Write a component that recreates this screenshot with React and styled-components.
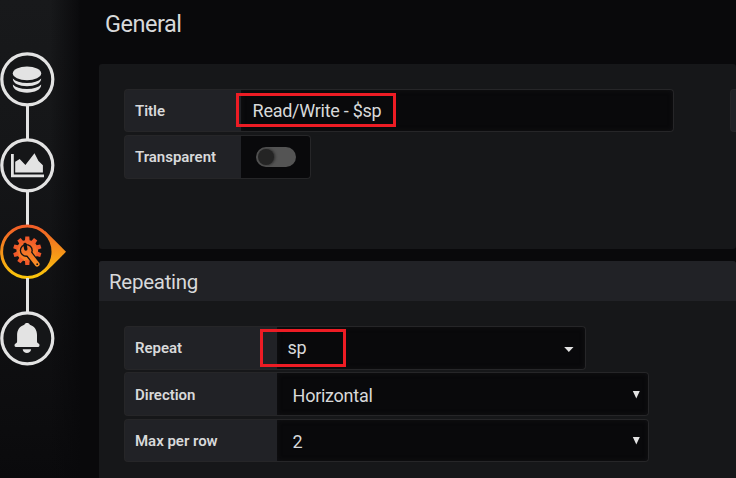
import React from "react";
import styled, { createGlobalStyle } from "styled-components";

const GlobalStyle = createGlobalStyle`
  * { box-sizing: border-box; }
  body {
    margin: 0;
    background: #09090b;
    color: #d8d9da;
    font-family: Roboto, "Liberation Sans", sans-serif;
    overflow: hidden;
  }
`;

const Page = styled.div`
  display: flex;
  width: 736px;
  height: 478px;
  overflow: hidden;
`;

const Rail = styled.nav`
  display: flex;
  flex-direction: column;
  flex: none;
  width: 80px;
  padding-top: 52px;
  background: linear-gradient(90deg, rgba(9, 9, 11, 0) 50px, rgba(9, 9, 11, 0.85) 78px, #09090b 80px),
    linear-gradient(180deg, #18191b 0, #151618 150px, #0c0c0e 430px, #0a0a0c 478px);
`;

const Step = styled.svg`
  display: block;
  flex: none;
  width: 68px;
  height: 55px;
  overflow: visible;
`;

const Connector = styled.div`
  flex: none;
  width: 3px;
  height: 34.4px;
  margin: -2px 0 -1px 26px;
  background: #e3e3e3;
`;

const Main = styled.main`
  flex: none;
  display: flex;
  flex-direction: column;
  width: 656px;
  padding-left: 19px;
`;

const Heading = styled.h2`
  flex: none;
  margin: 0;
  height: 64px;
  padding: 10px 0 0 6px;
  font-size: 23.5px;
  line-height: 28px;
  font-weight: 400;
  letter-spacing: -0.5px;
`;

const Panel = styled.section`
  flex: none;
  height: ${(p) => p.$height}px;
  margin-bottom: 12px;
  border-radius: 3px;
  background: #161719;
`;

const PanelHeader = styled.h3`
  margin: 0;
  height: 40px;
  padding-left: 10px;
  border-radius: 3px 3px 0 0;
  background: #212226;
  font-size: 20.5px;
  line-height: 42px;
  font-weight: 400;
  letter-spacing: -0.28px;
`;

const Columns = styled.div`
  display: flex;
  gap: 56px;
  padding: 25px 0 0 25px;
`;

const Fields = styled.div`
  display: flex;
  flex-direction: column;
  flex: none;
`;

const Row = styled.div`
  position: relative;
  display: flex;
  flex: none;
  width: ${(p) => p.$width}px;
  height: ${(p) => p.$height}px;
  margin-bottom: ${(p) => p.$gap || 0}px;
`;

const Label = styled.label`
  flex: none;
  width: ${(p) => p.$width}px;
  padding-left: 10px;
  border: 1px solid #262628;
  border-right: 0;
  border-radius: 4px 0 0 4px;
  background: #212226;
  font-size: 15px;
  line-height: ${(p) => p.$line || 42}px;
  font-weight: 600;
  letter-spacing: -0.02px;
`;

const Field = styled.div`
  display: flex;
  flex: 1;
  align-items: center;
  justify-content: space-between;
  padding: ${(p) => p.$padding};
  border: 1px solid #262628;
  border-left: 0;
  border-radius: 0 4px 4px 0;
  background: #09090b;
  box-shadow: ${(p) => (p.$flat ? "none" : "inset 0 0 5px #131315")};
  font-size: 18px;
  line-height: 22px;
`;

const Value = styled.span`
  letter-spacing: -0.27px;
`;

const Toggle = styled.div`
  display: flex;
  width: 40px;
  height: 20px;
  padding: 2px;
  border-radius: 10px;
  background: #545454;
`;

const Knob = styled.span`
  width: 16px;
  height: 16px;
  border-radius: 50%;
  background: #242424;
  box-shadow: 1px 0 3px #292929;
`;

const Highlight = styled.div`
  position: absolute;
  left: ${(p) => p.$left}px;
  top: ${(p) => p.$top}px;
  width: ${(p) => p.$width}px;
  height: ${(p) => p.$height}px;
  border: 3px solid #ed1c24;
`;

const Ring = () => (
  <circle cx="27.3" cy="27.3" r="25.5" fill="#151618" stroke="#e3e3e3" strokeWidth="3.2" />
);

const teeth = Array.from({ length: 10 }, (_, i) => i * 36);

function QueriesStep() {
  return (
    <Step viewBox="0 0 68 55">
      <Ring />
      <g fill="#e3e3e3">
        <ellipse cx="27" cy="21.3" rx="14.2" ry="6.9" />
        <path d="M12.8 26.6 Q17 31 27 31 Q37 31 41.2 26.6 C41.2 31.7 34.7 34.2 27 34.2 C19.3 34.2 12.8 31.7 12.8 26.6Z" />
        <path d="M12.8 32.6 Q17 37 27 37 Q37 37 41.2 32.6 C41.2 38 34.7 40.7 27 40.7 C19.3 40.7 12.8 38 12.8 32.6Z" />
      </g>
    </Step>
  );
}

function ChartStep() {
  return (
    <Step viewBox="0 0 68 55">
      <Ring />
      <path d="M12.4 16v21.8H44" fill="none" stroke="#e3e3e3" strokeWidth="2.8" />
      <path d="M15.2 34.6V23.8L19.7 21 25.4 27 34.5 15.3 38.5 23 42.9 27.3V34.6Z" fill="#e3e3e3" />
    </Step>
  );
}

function GeneralStep() {
  return (
    <Step viewBox="0 0.6 68 55">
      <defs>
        <linearGradient id="ember" gradientUnits="userSpaceOnUse" x1="0" y1="0" x2="0" y2="55">
          <stop offset="0" stopColor="#f05a28" />
          <stop offset="1" stopColor="#fbca0a" />
        </linearGradient>
        <linearGradient id="gear" gradientUnits="userSpaceOnUse" x1="0" y1="12" x2="0" y2="44">
          <stop offset="0" stopColor="#f0552a" />
          <stop offset="1" stopColor="#f99524" />
        </linearGradient>
      </defs>
      <path d="M45 6.5 Q54 15 66 27.3 Q54 40 45 48Z" fill="url(#ember)" />
      <circle cx="27.3" cy="27.3" r="25.7" fill="#121315" stroke="url(#ember)" strokeWidth="3" />
      <g fill="url(#gear)">
        <circle cx="27.3" cy="26.3" r="10.8" />
        {teeth.map((angle) => (
          <path key={angle} d="M24.9 17l.4-4.9h4l.4 4.9z" transform={`rotate(${angle} 27.3 26.3)`} />
        ))}
      </g>
      <circle cx="26.3" cy="26" r="6.5" fill="#121315" />
      <path d="M28 28l9.4 12.3" stroke="#121315" strokeWidth="7.4" strokeLinecap="round" />
      <circle cx="26.3" cy="26" r="5.2" fill="url(#gear)" />
      <path d="M28 28l9.2 11.8" stroke="url(#gear)" strokeWidth="4.8" strokeLinecap="round" />
      <path d="M25 20l.8 4.6" fill="none" stroke="#121315" strokeWidth="3.4" strokeLinecap="round" />
      <circle cx="37.2" cy="39.8" r=".9" fill="#121315" />
    </Step>
  );
}

function AlertStep() {
  return (
    <Step viewBox="0 0 68 55">
      <Ring />
      <g fill="#e3e3e3">
        <path d="M24.4 13.8C24.7 11.3 29.4 11.3 29.8 13.8C34.5 15.2 37 19 37 24V30.5Q37 32 38.5 32.5Q39.7 33 39.5 34.5Q39.4 36 37.8 36H16.2Q14.6 36 14.5 34.5Q14.4 33 15.6 32.5Q17.1 32 17.1 30.5V24C17.1 19 19.7 15.2 24.4 13.8Z" />
        <path d="M22.7 38.2H31.1C30.6 43.3 23.2 43.3 22.7 38.2Z" />
      </g>
    </Step>
  );
}

const Caret = () => (
  <svg width="10" height="7" viewBox="0 0 10 7">
    <path d="M.2 2h9.3L4.85 7z" fill="#e3e3e3" />
  </svg>
);

const SelectArrow = () => (
  <svg width="8" height="10" viewBox="0 0 8 10">
    <path d="M.8 0h7L4.3 7.4z" fill="#e3e3e3" />
  </svg>
);

export default function App() {
  return (
    <>
      <GlobalStyle />
      <Page>
        <Rail>
          <QueriesStep />
          <Connector />
          <ChartStep />
          <Connector />
          <GeneralStep />
          <Connector />
          <AlertStep />
        </Rail>
        <Main>
          <Heading>General</Heading>
          <Panel $height={185}>
            <Columns>
              <Fields>
                <Row $width={550} $height={43} $gap={3}>
                  <Label $width={117}>Title</Label>
                  <Field $padding="0 11px 0 11.6px">
                    <Value>Read/Write - $sp</Value>
                  </Field>
                  <Highlight $left={112} $top={4} $width={160} $height={34} />
                </Row>
                <Row $width={187} $height={44}>
                  <Label $width={117}>Transparent</Label>
                  <Field $padding="0 14px 0 15px" $flat>
                    <Toggle>
                      <Knob />
                    </Toggle>
                  </Field>
                </Row>
              </Fields>
              <Row $width={120} $height={43}>
                <Label $width={120} />
              </Row>
            </Columns>
          </Panel>
          <Panel $height={220}>
            <PanelHeader>Repeating</PanelHeader>
            <Columns>
              <Fields>
                <Row $width={462} $height={44} $gap={2}>
                  <Label $width={153}>Repeat</Label>
                  <Field $padding="0 11px 0 10.6px">
                    <Value>sp</Value>
                    <Caret />
                  </Field>
                  <Highlight $left={136} $top={3} $width={86} $height={38} />
                </Row>
                <Row $width={525} $height={44} $gap={3}>
                  <Label $width={153} $line={44}>Direction</Label>
                  <Field $padding="4px 8px 0 15.6px">
                    <Value>Horizontal</Value>
                    <SelectArrow />
                  </Field>
                </Row>
                <Row $width={525} $height={43}>
                  <Label $width={153}>Max per row</Label>
                  <Field $padding="3px 8px 0 15.6px">
                    <Value>2</Value>
                    <SelectArrow />
                  </Field>
                </Row>
              </Fields>
            </Columns>
          </Panel>
        </Main>
      </Page>
    </>
  );
}
